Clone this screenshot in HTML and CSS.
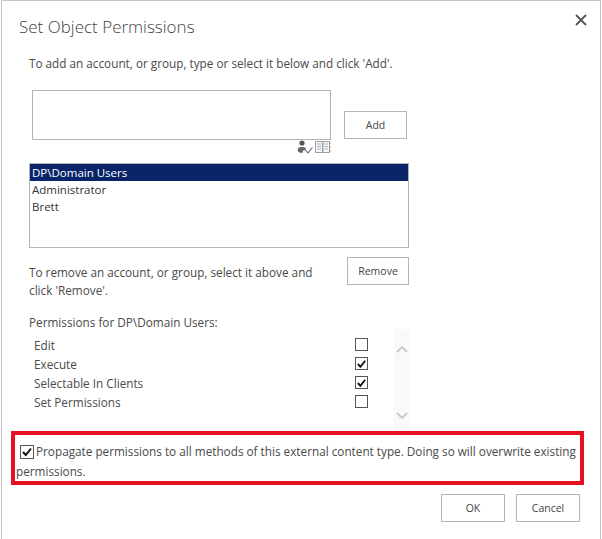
FILE: index.html
```html
<!DOCTYPE html>
<html lang="en">
<head>
    <meta charset="UTF-8">
    <title>Set Object Permissions</title>
    <link rel="stylesheet" href="styles.css">
</head>
<body>
    <div class="dialog">
        <div class="title-row">
            <h1>Set Object Permissions</h1>
            <svg class="close-icon" width="12" height="12" viewBox="0 0 12 12"><path d="M1 1 L11 11 M11 1 L1 11" stroke="#555" stroke-width="1.8" fill="none"/></svg>
        </div>
        <p class="intro">To add an account, or group, type or select it below and click 'Add'.</p>

        <div class="add-row">
            <div class="people-box">
                <div class="people-input"></div>
                <div class="people-icons">
                    <svg width="16" height="14" viewBox="0 0 16 14">
                        <circle cx="5" cy="3" r="2.6" fill="#555"/>
                        <path d="M1 8.5 C1 6.5 9 6.5 9 8.5 L8 10.5 L6 10.5 L5.5 13 L2.5 12.5 C1 12 0.5 10 1 8.5 Z" fill="#666"/>
                        <path d="M8.5 10 L11 12.8 L15.5 7.5" stroke="#667" stroke-width="1.1" fill="none"/>
                    </svg>
                    <svg width="16" height="14" viewBox="0 0 16 14">
                        <path d="M0.5 1.5 H7.5 V12.5 H0.5 Z M8 1.5 H14.5 V12.5 H8 Z" fill="#f4f6f8" stroke="#9aa3ad"/>
                        <path d="M2 4 H6 M2 6.500 H6 M2 9 H6 M9.500 4 H13 M9.500 6.500 H13 M9.500 9 H13" stroke="#a9b1ba"/>
                        <path d="M15 2 V4 M15 6 V8 M15 10 V12" stroke="#c9874a"/>
                    </svg>
                </div>
            </div>
            <button class="btn btn-add">Add</button>
        </div>

        <ul class="account-list">
            <li class="selected">DP\Domain Users</li>
            <li>Administrator</li>
            <li>Brett</li>
        </ul>

        <div class="remove-row">
            <p>To remove an account, or group, select it above and click 'Remove'.</p>
            <button class="btn btn-remove">Remove</button>
        </div>

        <p class="perm-label">Permissions for DP\Domain Users:</p>
        <div class="perm-area">
            <div class="perm-list">
                <div class="perm-row"><span>Edit</span><span class="check"></span></div>
                <div class="perm-row"><span>Execute</span><span class="check"><svg width="12" height="12" viewBox="0 0 12 12"><path d="M2 6 L4.800 9 L10 2.500" stroke="#111" stroke-width="2" fill="none"/></svg></span></div>
                <div class="perm-row"><span>Selectable In Clients</span><span class="check"><svg width="12" height="12" viewBox="0 0 12 12"><path d="M2 6 L4.800 9 L10 2.500" stroke="#111" stroke-width="2" fill="none"/></svg></span></div>
                <div class="perm-row"><span>Set Permissions</span><span class="check"></span></div>
            </div>
            <div class="scroll">
                <svg width="14" height="8" viewBox="0 0 14 8"><path d="M2 7 L7 2 L12 7" stroke="#c9c9c9" stroke-width="1.800" fill="none"/></svg>
                <svg width="14" height="8" viewBox="0 0 14 8"><path d="M2 1 L7 6 L12 1" stroke="#c9c9c9" stroke-width="1.800" fill="none"/></svg>
            </div>
        </div>

        <div class="propagate">
            <p><span class="check check-inline"><svg width="12" height="12" viewBox="0 0 12 12"><path d="M2 6 L4.800 9 L10 2.500" stroke="#111" stroke-width="2" fill="none"/></svg></span>Propagate permissions to all methods of this external content type. Doing so will overwrite existing permissions.</p>
        </div>

        <div class="footer">
            <button class="btn">OK</button>
            <button class="btn">Cancel</button>
        </div>
    </div>
</body>
</html>
```

FILE: styles.css
```css
body {
    margin: 0;
    background: #fff;
    font-family: "Open Sans", "Noto Sans", Arial, sans-serif;
    font-size: 11.75px;
    color: #4a4a4a;
}
p {
    margin: 0;
}
.dialog {
    box-sizing: border-box;
    width: 600px;
    height: 539px;
    margin-left: 1px;
    padding: 0 0 0 10px;
    border: 1px solid #c6c6c6;
    border-bottom: none;
    overflow: hidden;
}
.title-row {
    display: flex;
    justify-content: space-between;
    height: 47px;
    padding: 14px 13px 0 7px;
    box-sizing: border-box;
}
h1 {
    margin: 0;
    font-size: 17px;
    font-weight: 300;
    line-height: 24px;
    color: #444;
}
.close-icon {
    margin-top: -1px;
}
.intro {
    margin-left: 17px;
    line-height: 30px;
}
.add-row {
    display: flex;
    align-items: flex-start;
    margin: 12px 0 0 20px;
}
.people-input {
    box-sizing: border-box;
    width: 299px;
    height: 50px;
    border: 1px solid #b5b5b5;
}
.people-icons {
    display: flex;
    justify-content: flex-end;
    gap: 2px;
    height: 23px;
}
.btn {
    box-sizing: border-box;
    width: 64px;
    height: 28px;
    padding: 0;
    background: #fff;
    border: 1px solid #b5b5b5;
    font-family: inherit;
    font-size: 10.5px;
    color: #444;
}
.btn-add {
    width: 63px;
    margin: 21px 0 0 13px;
}
.account-list {
    box-sizing: border-box;
    width: 380px;
    height: 85px;
    margin: 0 0 0 17px;
    padding: 0;
    list-style: none;
    border: 1px solid #b5b5b5;
    font-size: 11.5px;
    line-height: 17px;
    color: #333;
}
.account-list li {
    padding-left: 2px;
}
.account-list .selected {
    background: #0a246a;
    color: #fff;
}
.remove-row {
    display: flex;
    align-items: flex-start;
    justify-content: space-between;
    width: 380px;
    margin: 9px 0 0 17px;
}
.remove-row p {
    width: 300px;
    padding-top: 6px;
    line-height: 18px;
}
.btn-remove {
    width: 62px;
}
.perm-label {
    margin: 14px 0 0 17px;
    line-height: 18px;
}
.perm-area {
    display: flex;
    width: 380px;
    height: 100px;
    margin: -2px 0 0 18px;
}
.perm-list {
    width: 347px;
    padding-top: 6px;
}
.perm-row {
    display: flex;
    justify-content: space-between;
    align-items: center;
    height: 19px;
    padding-left: 4px;
    padding-right: 9px;
}
.check {
    box-sizing: border-box;
    display: inline-flex;
    align-items: center;
    justify-content: center;
    width: 13px;
    height: 13px;
    border: 1px solid #555;
    background: #fff;
}
.scroll {
    display: flex;
    flex-direction: column;
    justify-content: space-between;
    align-items: center;
    box-sizing: border-box;
    width: 16px;
    margin-left: 17px;
    padding: 16px 0 9px;
    background: #f9f9f9;
}
.propagate {
    box-sizing: border-box;
    width: 573px;
    height: 54px;
    margin: 2px 0 0 -1px;
    padding: 6px 2px 0 1px;
    border: 4px solid #e81123;
}
.propagate p {
    line-height: 20px;
}
.check-inline {
    width: 14px;
    height: 14px;
    margin: 0 2px 0 4px;
    vertical-align: -2px;
}
.footer {
    display: flex;
    justify-content: flex-end;
    gap: 11px;
    width: 568px;
    margin-top: 9px;
}
```
